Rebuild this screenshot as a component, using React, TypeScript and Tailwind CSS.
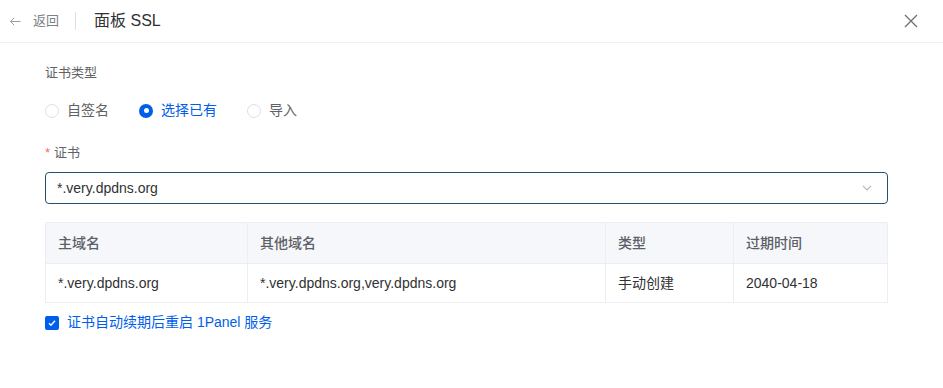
import React from "react";

const font = { fontFamily: '"Liberation Sans", "Noto Sans CJK SC", sans-serif' };

function Radio({ checked, label }: { checked?: boolean; label: string }) {
  return (
    <label className="flex items-center gap-[8px]">
      {checked ? (
        <span className="w-[14px] h-[14px] rounded-full bg-[#005eeb] flex items-center justify-center">
          <span className="w-[5px] h-[5px] rounded-full bg-white" />
        </span>
      ) : (
        <span className="w-[14px] h-[14px] rounded-full border border-[#dcdfe6] bg-white" />
      )}
      <span className={`text-[14px] ${checked ? "text-[#005eeb]" : "text-[#606266]"}`}>{label}</span>
    </label>
  );
}

export default function App() {
  return (
    <div className="w-[943px] h-[388px] bg-white" style={font}>
      <div className="h-[43px] border-b border-[#eef0f3] flex items-center pl-[8px] pr-[25px]">
        <div className="flex items-center text-[#8a8d93]">
          <svg width="15" height="15" viewBox="0 0 24 24" fill="none" stroke="#9a9da3" strokeWidth="1.6">
            <path d="M20 12H4M10 6l-6 6 6 6" />
          </svg>
          <span className="ml-[10px] text-[13px] text-[#7d8087]">返回</span>
        </div>
        <div className="w-px h-[18px] bg-[#dcdfe6] ml-[16px] mr-[18px]" />
        <span className="text-[16px] text-[#303133]">面板 SSL</span>
        <div className="flex-1" />
        <svg width="14" height="14" viewBox="0 0 14 14" stroke="#6b6e74" strokeWidth="1.3">
          <path d="M1 1l12 12M13 1L1 13" />
        </svg>
      </div>

      <div className="pl-[45px] pr-[55px]">
        <div className="mt-[21px] text-[13px] text-[#606266] leading-[18px]">证书类型</div>
        <div className="mt-[18px] flex items-center gap-[30px]">
          <Radio label="自签名" />
          <Radio checked label="选择已有" />
          <Radio label="导入" />
        </div>
        <div className="mt-[23px] text-[13px] text-[#606266] leading-[18px]">
          <span className="text-[#f56c6c] mr-[4px]">*</span>证书
        </div>
        <div className="mt-[10px] h-[32px] border border-[#23506e] rounded-[4px] flex items-center pl-[11px] pr-[14px]">
          <span className="text-[14px] text-[#303133] flex-1">*.very.dpdns.org</span>
          <svg width="12" height="12" viewBox="0 0 12 12" fill="none" stroke="#b5b8be" strokeWidth="1.1">
            <path d="M2 4l4 4 4-4" />
          </svg>
        </div>

        <div className="mt-[18px] border border-[#ebeef5] text-[14px]">
          <div className="grid grid-cols-[202px_358px_128px_1fr] h-[40px] bg-[#f5f7fa] text-[#5c5f66] font-medium">
            <div className="flex items-center pl-[12px] border-r border-[#ebeef5]">主域名</div>
            <div className="flex items-center pl-[12px] border-r border-[#ebeef5]">其他域名</div>
            <div className="flex items-center pl-[12px] border-r border-[#ebeef5]">类型</div>
            <div className="flex items-center pl-[12px]">过期时间</div>
          </div>
          <div className="grid grid-cols-[202px_358px_128px_1fr] h-[39px] border-t border-[#ebeef5] text-[#303133]">
            <div className="flex items-center pl-[12px] border-r border-[#ebeef5]">*.very.dpdns.org</div>
            <div className="flex items-center pl-[12px] border-r border-[#ebeef5]">*.very.dpdns.org,very.dpdns.org</div>
            <div className="flex items-center pl-[12px] border-r border-[#ebeef5]">手动创建</div>
            <div className="flex items-center pl-[12px]">2040-04-18</div>
          </div>
        </div>

        <div className="mt-[9px] flex items-center gap-[8px]">
          <span className="w-[14px] h-[14px] rounded-[2px] bg-[#005eeb] flex items-center justify-center">
            <svg width="10" height="10" viewBox="0 0 10 10" fill="none" stroke="white" strokeWidth="1.4">
              <path d="M2 5.2l2 2 4-4.4" />
            </svg>
          </span>
          <span className="text-[14px] text-[#005eeb]">证书自动续期后重启 1Panel 服务</span>
        </div>
      </div>
    </div>
  );
}
